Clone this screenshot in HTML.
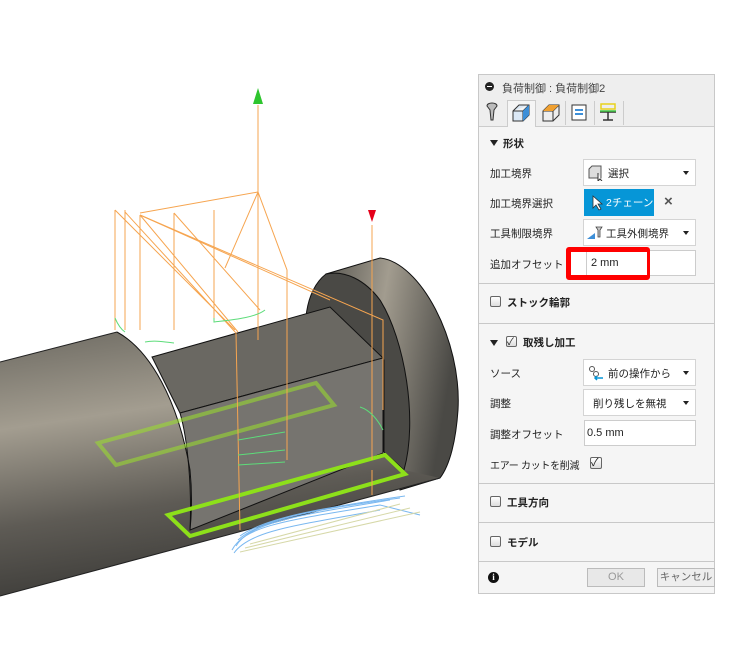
<!DOCTYPE html>
<html><head><meta charset="utf-8"><style>
body{margin:0;width:755px;height:648px;background:#fff;position:relative;overflow:hidden;font-family:"Liberation Sans","Noto Sans CJK JP",sans-serif;}
.p{position:absolute;left:478px;top:74px;width:237px;height:520px;border:1px solid #c8c8c8;background:#f5f5f5;box-sizing:border-box;}
.a{position:absolute;font-size:10.5px;color:#222;white-space:nowrap;}
.b{font-weight:bold;font-size:10.5px;}
.dd{position:absolute;background:#fff;border:1px solid #d4d4d4;box-sizing:border-box;height:27px;}
.dd .t{position:absolute;top:6px;font-size:10.5px;color:#222;white-space:nowrap;}
.dd .ar{position:absolute;right:6px;top:11px;width:0;height:0;border-left:3.5px solid transparent;border-right:3.5px solid transparent;border-top:4px solid #222;}
.inp{position:absolute;background:#fff;border:1px solid #ccc;box-sizing:border-box;height:26px;}
.ln{position:absolute;left:0;width:235px;height:1px;background:#c8c8c8;}
.cb{position:absolute;width:11px;height:11px;border:1px solid #666;border-radius:2px;background:linear-gradient(#fff,#ddd);box-sizing:border-box;}
.tri{position:absolute;width:0;height:0;border-left:4px solid transparent;border-right:4px solid transparent;border-top:6px solid #222;}
</style></head><body>
<svg width="478" height="648" style="position:absolute;left:0;top:0">
<defs>
<linearGradient id="cyl" x1="0" y1="0" x2="0.25" y2="1">
<stop offset="0" stop-color="#6d6a62"/><stop offset="0.35" stop-color="#a39d90"/><stop offset="0.7" stop-color="#5e5b55"/><stop offset="1" stop-color="#3c3b38"/></linearGradient>
<linearGradient id="fl" x1="0" y1="0" x2="1" y2="0.3">
<stop offset="0" stop-color="#5a5852"/><stop offset="0.45" stop-color="#a29c8f"/><stop offset="1" stop-color="#4a4945"/></linearGradient>
</defs>
<path d="M326,274 L380,258 C420,262 462,340 458,410 C456,440 450,465 440,478 L400,490 Z" fill="url(#fl)" stroke="#111" stroke-width="1"/>
<path d="M326,274 C305,290 300,330 312,360 L384,360 L384,452 L404,470 C418,420 405,340 380,300 C365,280 345,270 326,274 Z" fill="#4a4945" stroke="#111" stroke-width="1"/>
<path d="M0,362 L117,332 C150,350 178,400 190,470 C193,500 191,520 190,530 L383,453 L404,470 L440,478 L0,596 Z" fill="url(#cyl)"/>
<path d="M0,362 L117,332" stroke="#222" fill="none"/>
<path d="M0,596 L440,478" stroke="#222" fill="none"/>
<path d="M152,357 L330,307 L383,358 L180,413 Z" fill="#6a6862" stroke="#111"/>
<path d="M180,413 L383,358 L383,453 L190,530 C192,490 188,440 180,413 Z" fill="#76746f" stroke="#111"/>
<path d="M117,332 C150,350 178,400 190,470 C193,500 191,520 190,530" stroke="#111" fill="none"/>
<g stroke="#9be22a" stroke-width="4" fill="none" opacity="0.55"><path d="M98,443 L316,383 L334,405 L116,465 Z"/></g>
<g stroke="#8de01a" stroke-width="4" fill="none"><path d="M385,455 L405,474 L190,536 L168,515 Z"/></g>
<g stroke="#f6a550" stroke-width="1" fill="none">
<path d="M258,105 L258,340"/><path d="M372,225 L372,460"/>
<path d="M115,210 L115,330 M125,210 L125,330 M140,215 L140,330 M174,213 L174,330 M214,210 L214,320"/>
<path d="M140,215 L238,332 M140,213 L258,192 L287,270 L287,320 M140,215 L383,320 L383,410"/>
<path d="M115,210 L235,330 M125,212 L236,333 M236,333 L240,530"/>
<path d="M140,215 L330,300 M287,320 L287,460 M372,470 L372,495"/>
<path d="M258,192 L225,268 M174,213 L260,310"/>
</g>
<g stroke="#5ddc7a" stroke-width="1" fill="none">
<path d="M115,318 C118,325 122,330 125,332 M145,342 C155,340 165,342 174,343 M214,318 L214,322 C230,320 255,318 265,310"/>
<path d="M238,440 L285,432 M238,455 L285,450 M238,465 L285,462 M360,407 C370,410 378,420 383,430"/>
</g>
<g stroke="#7ab8f0" stroke-width="1" fill="none">
<path d="M232,550 C245,525 290,520 380,505 L420,515"/><path d="M234,553 C250,530 300,525 380,510"/><path d="M236,546 C250,522 300,515 390,500"/><path d="M238,540 C260,520 310,510 400,498"/><path d="M240,536 C265,518 320,508 405,496"/>
</g>
<g stroke="#d6d8a8" stroke-width="1" fill="none"><path d="M240,552 L420,512 M245,548 L410,508 M250,544 L400,504"/></g>
<path d="M258,88 L253,104 L263,104 Z" fill="#2ec52e"/>
<path d="M368,210 L376,210 L372,222 Z" fill="#e5001a"/>
</svg>

<div class="p">
<div style="position:absolute;left:0;top:0;width:235px;height:23px;background:#eeeeee;border-bottom:1px solid #ccc"></div>
<div style="position:absolute;left:6px;top:7px;width:9px;height:9px;border-radius:50%;background:#222"><div style="position:absolute;left:2px;top:4px;width:5px;height:1px;background:#fff"></div></div>
<div class="a" style="left:23px;top:5px;color:#444;font-size:11px">負荷制御 : 負荷制御2</div>
<div style="position:absolute;left:0;top:23px;width:235px;height:28px;background:#eee;border-bottom:1px solid #ccc"></div>
<div style="position:absolute;left:28px;top:25px;width:29px;height:27px;background:#f5f5f5;border:1px solid #ccc;border-bottom:none;box-sizing:border-box"></div>
<div style="position:absolute;left:86px;top:26px;width:1px;height:24px;background:#ccc"></div>
<div style="position:absolute;left:115px;top:26px;width:1px;height:24px;background:#ccc"></div>
<div style="position:absolute;left:144px;top:26px;width:1px;height:24px;background:#ccc"></div>
<svg width="150" height="28" style="position:absolute;left:0;top:23px">
<path d="M8,8 C8,4 18,4 18,8 L15,12 L14,22 L12,22 L11,12 Z" fill="#bbb" stroke="#333"/>
<path d="M34,13 L40,7 L50,7 L50,17 L44,23 L34,23 Z M34,13 L44,13 L50,7 M44,13 L44,23" fill="#dbe8f5" stroke="#333"/>
<path d="M44,13 L50,7 L50,17 L44,23 Z" fill="#3d8fd8"/>
<path d="M64,13 L70,7 L80,7 L80,17 L74,23 L64,23 Z M64,13 L74,13 L80,7 M74,13 L74,23" fill="#eee" stroke="#333"/>
<path d="M64,13 L70,7 L80,7 L74,13 Z" fill="#f0a030"/>
<rect x="93" y="7" width="14" height="15" fill="#fff" stroke="#333"/><rect x="96" y="11" width="8" height="2" fill="#3d8fd8"/><rect x="96" y="15" width="8" height="2" fill="#3d8fd8"/>
<rect x="122" y="6" width="14" height="5" fill="none" stroke="#e8d21c" stroke-width="1.5"/><path d="M121,14 L137,14 M129,14 L129,22 M124,22 L134,22" stroke="#333" stroke-width="1.5" fill="none"/><path d="M121,13 L137,13" stroke="#4c4" stroke-width="1.5"/>
</svg>
<div class="tri" style="left:11px;top:65px"></div><div class="a b" style="left:24px;top:61px">形状</div>
<div class="a" style="left:11px;top:91px">加工境界</div>
<div class="dd" style="left:104px;top:84px;width:113px"><svg width="16" height="16" style="position:absolute;left:4px;top:5px"><path d="M1,4 L4,1 L13,1 L13,13 L1,13 Z" fill="#ddd" stroke="#555"/><path d="M10,8 L10,16 L12,14 L14,16" fill="#fff" stroke="#333"/></svg><span class="t" style="left:24px">選択</span><div class="ar"></div></div>
<div class="a" style="left:11px;top:121px">加工境界選択</div>
<div style="position:absolute;left:105px;top:114px;width:70px;height:27px;background:#0696d7"><svg width="12" height="16" style="position:absolute;left:8px;top:6px"><path d="M1,1 L1,13 L4,10 L7,15 L9,14 L6,9 L10,9 Z" fill="#fff" stroke="#333" stroke-width=".8"/></svg><span style="position:absolute;left:22px;top:6px;font-size:10.5px;color:#fff;white-space:nowrap">2チェーン</span></div>
<div class="a" style="left:185px;top:118px;font-size:15px;color:#555;font-weight:bold">×</div>
<div class="a" style="left:11px;top:151px">工具制限境界</div>
<div class="dd" style="left:104px;top:144px;width:113px"><svg width="18" height="16" style="position:absolute;left:3px;top:5px"><path d="M0,14 L8,8 L8,14 Z" fill="#3d8fd8"/><path d="M9,2 L15,2 L13,5 L13,12 L11,12 L11,5 Z" fill="#ccc" stroke="#444" stroke-width=".8"/></svg><span class="t" style="left:22px">工具外側境界</span><div class="ar"></div></div>
<div class="a" style="left:11px;top:182px">追加オフセット</div>
<div class="inp" style="left:105px;top:175px;width:112px"></div>
<div style="position:absolute;left:87px;top:172px;width:84px;height:33px;border:5px solid #ff0000;border-radius:3px;box-sizing:border-box;background:#fff"><div style="position:absolute;left:15px;top:0;width:60px;height:23px;background:#fff;border-left:1px solid #ccc"></div><span style="position:absolute;left:20px;top:5px;font-size:11px;color:#222">2 mm</span></div>
<div class="ln" style="top:208px"></div>
<div class="cb" style="left:11px;top:221px"></div><div class="a b" style="left:28px;top:220px">ストック輪郭</div>
<div class="ln" style="top:248px"></div>
<div class="tri" style="left:11px;top:265px"></div><div class="cb" style="left:27px;top:261px"></div><div class="a" style="left:28px;top:258px;font-size:10px">✓</div><div class="a b" style="left:44px;top:260px">取残し加工</div>
<div class="a" style="left:11px;top:291px">ソース</div>
<div class="dd" style="left:104px;top:284px;width:113px"><svg width="16" height="16" style="position:absolute;left:4px;top:5px"><circle cx="4" cy="4" r="2.5" fill="none" stroke="#555"/><circle cx="8" cy="9" r="2.5" fill="none" stroke="#555"/><path d="M7,13 L15,13 M9,11 L7,13 L9,15" stroke="#0696d7" stroke-width="1.5" fill="none"/></svg><span class="t" style="left:24px">前の操作から</span><div class="ar"></div></div>
<div class="a" style="left:11px;top:321px">調整</div>
<div class="dd" style="left:104px;top:314px;width:113px"><span class="t" style="left:9px">削り残しを無視</span><div class="ar"></div></div>
<div class="a" style="left:11px;top:352px">調整オフセット</div>
<div class="inp" style="left:105px;top:345px;width:112px"><span style="position:absolute;left:2px;top:6px;font-size:11px;color:#222">0.5 mm</span></div>
<div class="a" style="left:11px;top:382px;font-size:10px;letter-spacing:-0.3px">エアー カットを削減</div>
<div class="cb" style="left:111px;top:382px;width:12px;height:12px"></div><div class="a" style="left:112px;top:379px;font-size:11px">✓</div>
<div class="ln" style="top:408px"></div>
<div class="cb" style="left:11px;top:421px"></div><div class="a b" style="left:28px;top:420px">工具方向</div>
<div class="ln" style="top:447px"></div>
<div class="cb" style="left:11px;top:461px"></div><div class="a b" style="left:28px;top:460px">モデル</div>
<div class="ln" style="top:486px"></div>
<div style="position:absolute;left:9px;top:497px;width:11px;height:11px;border-radius:50%;background:#111;color:#fff;font-size:9px;font-weight:bold;text-align:center;line-height:11px;font-family:'Liberation Serif',serif">i</div>
<div style="position:absolute;left:108px;top:493px;width:58px;height:19px;border:1px solid #bbb;background:#e8e8e8;box-sizing:border-box;text-align:center;font-size:11px;line-height:17px;color:#999">OK</div>
<div style="position:absolute;left:178px;top:493px;width:58px;height:19px;border:1px solid #bbb;background:#eee;box-sizing:border-box;text-align:center;font-size:10.5px;line-height:17px;color:#666;white-space:nowrap">キャンセル</div>
</div>
</body></html>
